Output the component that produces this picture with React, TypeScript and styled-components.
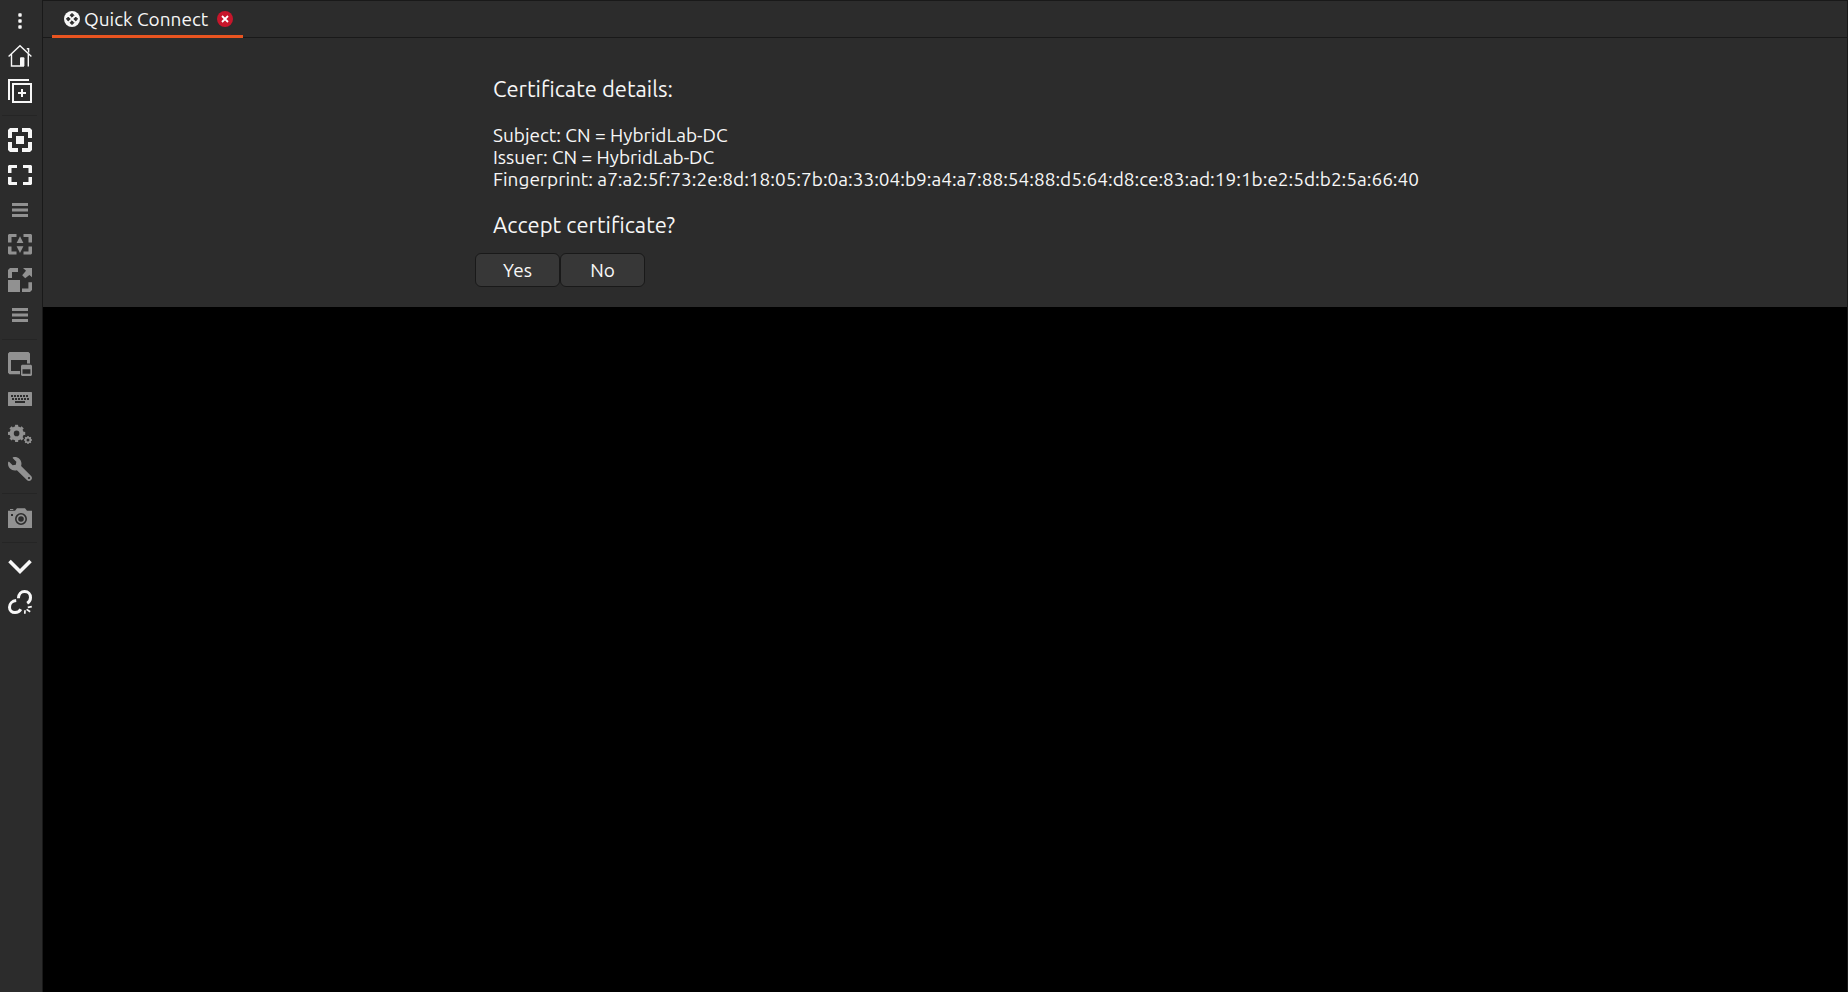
import React from "react";
import styled, { createGlobalStyle } from "styled-components";
import { FaWrench } from "react-icons/fa";

const bg = "#2c2c2c";
const edge = "#191919";
const ink = "#f7f7f7";
const dim = "#919191";

const GlobalStyle = createGlobalStyle`
  * { box-sizing: border-box; }
  body {
    margin: 0;
    background: #000;
    color: ${ink};
    font-family: Ubuntu, "Noto Sans", "Open Sans", sans-serif;
    font-size: 19px;
  }
`;

const Window = styled.div`
  display: flex;
  min-height: 100vh;
`;

const Toolbar = styled.nav`
  display: flex;
  flex-direction: column;
  flex: 0 0 43px;
  padding-top: 4px;
  background: ${bg};
  border-right: 1px solid ${edge};
`;

const ToolButton = styled.button`
  display: flex;
  height: 35px;
  padding: 5px 8px 6px;
  border: 0;
  background: none;
  color: ${ink};
  &:disabled { color: ${dim}; }
`;

const Icon = styled.svg`
  display: block;
  width: 24px;
  height: 24px;
  flex: none;
  fill: currentColor;
`;

const WrenchIcon = styled(FaWrench)`
  display: block;
  width: 24px;
  height: 24px;
  flex: none;
  transform: scaleX(-1);
`;

const Separator = styled.hr`
  width: 35px;
  height: 1px;
  margin: 6px 5px 7px 2px;
  border: 0;
  background: #252525;
`;

const Main = styled.main`
  display: flex;
  flex-direction: column;
  flex: 1;
  min-width: 0;
  border-top: 1px solid ${edge};
  border-right: 1px solid ${edge};
`;

const TabBar = styled.div`
  display: flex;
  height: 37px;
  padding-left: 9px;
  background: linear-gradient(${edge}, ${edge}) bottom / 100% 1px no-repeat ${bg};
`;

const Tab = styled.div`
  display: flex;
  align-items: center;
  justify-content: space-between;
  width: 191px;
  padding: 2px 10px 0 12px;
  border-bottom: 3px solid #e95420;
`;

const TabTitle = styled.button`
  display: flex;
  align-items: center;
  gap: 4px;
  padding: 0;
  border: 0;
  background: none;
  color: inherit;
  font: inherit;
  line-height: 24px;
  white-space: nowrap;
`;

const CloseButton = styled.button`
  display: flex;
  padding: 0;
  border: 0;
  background: none;
`;

const SmallIcon = styled(Icon)`
  width: 16px;
  height: 16px;
`;

const Panel = styled.section`
  display: flex;
  justify-content: center;
  padding: 36px 0 20px;
  background: ${bg};
`;

const Message = styled.div`
  width: 940px;
  max-width: 100%;
`;

const Heading = styled.h1`
  margin: 0;
  padding: 0 18px;
  font-size: 22px;
  font-weight: 400;
  line-height: 30px;
`;

const Details = styled.div`
  padding: 20px 18px;
`;

const Line = styled.p`
  margin: 0;
  line-height: 22px;
  white-space: nowrap;
`;

const Actions = styled.div`
  display: flex;
  margin-top: 13px;
`;

const Button = styled.button`
  width: 85px;
  height: 34px;
  padding: 0;
  border: 1px solid ${edge};
  border-radius: 6px;
  background: #373737;
  color: inherit;
  font: inherit;
  line-height: 30px;
`;

const keys = [3, 6, 9, 12, 15, 18];

function Gear({ x, y, r, hole, teeth }: { x: number; y: number; r: number; hole: number; teeth: number }) {
  const body = r * 0.82;
  const width = (body + hole) / 2;
  return (
    <g fill="none" stroke="currentColor">
      <circle cx={x} cy={y} r={width} strokeWidth={body - hole} />
      <g strokeWidth={r * 0.36}>
        {Array.from({ length: teeth }, (_, i) => (
          <path key={i} d={`M${x} ${y - r}v${r - body + 0.6}`} transform={`rotate(${(i * 360) / teeth} ${x} ${y})`} />
        ))}
      </g>
    </g>
  );
}

const shapes = {
  more: (
    <>
      <rect x="10.3" y="4.3" width="3.4" height="3.4" rx="0.8" />
      <rect x="10.3" y="10.3" width="3.4" height="3.4" rx="0.8" />
      <rect x="10.3" y="16.3" width="3.4" height="3.4" rx="0.8" />
    </>
  ),
  home: (
    <>
      <path d="M0.6 12.4L12 1.7L23.4 12.4M3.5 10V22H16M20.3 10V22.4M18.8 4.7h1.8v3.8" fill="none" stroke="currentColor" strokeWidth="1.4" />
      <path d="M12 14.3q0-1 1-1h2.4q1 0 1 1V22H12z" />
    </>
  ),
  add: (
    <>
      <path d="M0 0H21V2H2V21H0z" />
      <path d="M5 5H23V23H5zM14 10v8M10 14h8" fill="none" stroke="currentColor" strokeWidth="2" />
    </>
  ),
  fit: (
    <>
      <path d="M2 0H10V4H4V10H0V2zM14 0H22L24 2V10H20V4H14zM0 14H4V20H10V24H2L0 22zM20 14H24V22L22 24H14V20H20z" />
      <rect x="8" y="8" width="8" height="8" />
    </>
  ),
  fullscreen: <path d="M1 2H9V5H3.5V10H0V3zM15 2H23L24 3V10H20.5V5H15zM0 14H3.5V19H9V22H1L0 21zM20.5 14H24V21L23 22H15V19H20.5z" />,
  menu: <path d="M4 5H20V8H4zM4 10.6H20V13.4H4zM4 16H20V19H4z" />,
  stretch: <path d="M1 1H8.5V4H3.5V9.6H0V2zM15.5 1H23L24 2V9.6H20.5V4H15.5zM0 13.4H3.5V18.6H8.5V21.6H1L0 20.6zM20.5 13.4H24V20.6L23 21.6H15.5V18.6H20.5zM12 3.3L15.4 10H8.6zM8.6 13.2H15.4L12 20z" />,
  scale: <path d="M2 0H10V4H4V10H0V2zM0 12H12V24H0zM20.4 14.2H24V22L22 24H14V20.4H20.4zM15 0H24V9.3L21.4 7L17.2 10.2L14.2 7.2L18 2.8z" />,
  windows: (
    <>
      <path fillRule="evenodd" d="M1.5 0H20.5L22 1.5V11.5H19V8H3V19H12V22.3H1.5L0 20.8V1.5z" />
      <path fillRule="evenodd" d="M14 12.7H23L24 13.7V23L23 24H14L13 23V13.7zM14.5 17.3V21.8H22.4V17.3z" />
    </>
  ),
  keyboard: (
    <>
      <rect y="5" width="24" height="14" rx="0.5" />
      <g fill={bg}>
        {keys.map((x) => (
          <React.Fragment key={x}>
            <rect x={x} y="8" width="2" height="2" />
            <rect x={x + 1} y="11" width="2" height="2" />
          </React.Fragment>
        ))}
        <rect x="7" y="14" width="10" height="2" />
      </g>
    </>
  ),
  gears: (
    <>
      <Gear x={8.6} y={11.4} r={8.6} hole={2.8} teeth={8} />
      <Gear x={20} y={18} r={4} hole={1.5} teeth={8} />
    </>
  ),
  camera: (
    <>
      <path d="M0 4.7H7L9 2.3H17L19 4.7H24V22H0zM2 3H5.3V4H2z" />
      <circle cx="13" cy="13" r="5.2" fill="none" stroke={bg} strokeWidth="1.6" />
      <circle cx="13" cy="13" r="2.8" fill={bg} />
      <rect x="3" y="8" width="2" height="2" fill={bg} />
    </>
  ),
  down: <path d="M1.5 6L12 16.5L22.5 6" fill="none" stroke="currentColor" strokeWidth="3.6" />,
  unlink: (
    <g fill="none" stroke="currentColor" strokeWidth="3">
      <path d="M10.4 8.2C10.6 4.2 13.2 1.5 16.6 1.5C20.2 1.5 22.5 4.2 22.5 7.4C22.5 9.8 21.4 11.8 19.2 13.2" />
      <path d="M8.2 10.6C4.2 11 1.5 13.8 1.5 17.2C1.5 20.4 3.9 22.5 7 22.5C9.4 22.5 11.6 21.4 12.8 19.2" />
      <path d="M17 20.2L16.8 23.8M18.6 19.4L22.2 21.8M19.8 17.4L23.8 16.6" strokeWidth="1.7" />
    </g>
  ),
};

type Shape = keyof typeof shapes | "wrench";

const groups: { label: string; icon: Shape; off?: boolean }[][] = [
  [
    { label: "Main menu", icon: "more" },
    { label: "Open main window", icon: "home" },
    { label: "New connection", icon: "add" },
  ],
  [
    { label: "Fit window", icon: "fit" },
    { label: "Toggle fullscreen", icon: "fullscreen" },
    { label: "Fullscreen options", icon: "menu", off: true },
    { label: "Dynamic resolution", icon: "stretch", off: true },
    { label: "Scaled mode", icon: "scale", off: true },
    { label: "Scale options", icon: "menu", off: true },
  ],
  [
    { label: "Multi monitor", icon: "windows", off: true },
    { label: "Grab keyboard", icon: "keyboard", off: true },
    { label: "Preferences", icon: "gears", off: true },
    { label: "Tools", icon: "wrench", off: true },
  ],
  [{ label: "Screenshot", icon: "camera", off: true }],
  [
    { label: "Minimize window", icon: "down" },
    { label: "Disconnect", icon: "unlink" },
  ],
];

export default function App() {
  return (
    <Window>
      <GlobalStyle />
      <Toolbar aria-label="Connection toolbar">
        {groups.map((group, g) => (
          <React.Fragment key={g}>
            {g > 0 && <Separator />}
            {group.map(({ label, icon, off }) => (
              <ToolButton key={label} aria-label={label} disabled={off}>
                {icon === "wrench" ? <WrenchIcon /> : <Icon viewBox="0 0 24 24">{shapes[icon]}</Icon>}
              </ToolButton>
            ))}
          </React.Fragment>
        ))}
      </Toolbar>
      <Main>
        <TabBar>
          <Tab>
            <TabTitle>
              <SmallIcon viewBox="0 0 16 16">
                <circle cx="8" cy="8" r="8" />
                <path
                  d="M8 2.4L9.9 4.3L8 6.2L6.1 4.3zM8 9.8L9.9 11.7L8 13.6L6.1 11.7zM4.3 6.1L6.2 8L4.3 9.9L2.4 8zM11.7 6.1L13.6 8L11.7 9.9L9.8 8z"
                  fill={bg}
                  stroke={bg}
                  strokeWidth="1"
                  strokeLinejoin="round"
                />
              </SmallIcon>
              Quick Connect
            </TabTitle>
            <CloseButton aria-label="Close tab">
              <SmallIcon viewBox="0 0 16 16">
                <circle cx="8" cy="8" r="8" fill="#c7162b" />
                <path d="M5 5L11 11M11 5L5 11" stroke="#fff" strokeWidth="1.8" />
              </SmallIcon>
            </CloseButton>
          </Tab>
        </TabBar>
        <Panel>
          <Message>
            <Heading>Certificate details:</Heading>
            <Details>
              <Line>Subject: CN = HybridLab-DC</Line>
              <Line>Issuer: CN = HybridLab-DC</Line>
              <Line>Fingerprint: a7:a2:5f:73:2e:8d:18:05:7b:0a:33:04:b9:a4:a7:88:54:88:d5:64:d8:ce:83:ad:19:1b:e2:5d:b2:5a:66:40</Line>
            </Details>
            <Heading as="h2">Accept certificate?</Heading>
            <Actions>
              <Button>Yes</Button>
              <Button>No</Button>
            </Actions>
          </Message>
        </Panel>
      </Main>
    </Window>
  );
}
